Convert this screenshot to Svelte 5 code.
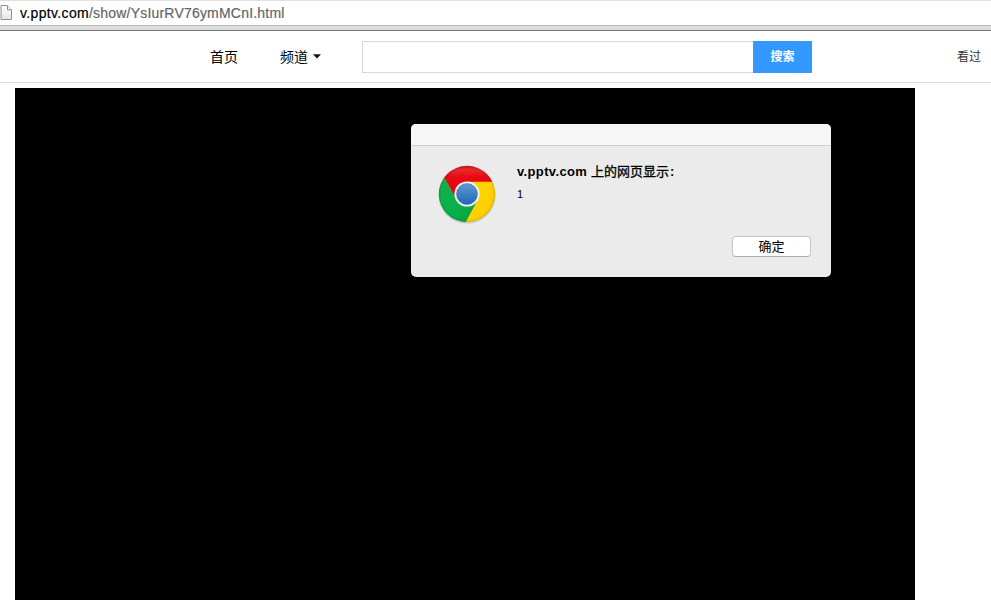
<script>
  const host = 'v.pptv.com';
  const path = '/show/YsIurRV76ymMCnI.html';
</script>

<div class="window">
  <div class="address">
    <svg class="doc" width="12" height="16" viewBox="0 0 12 16">
      <defs>
        <linearGradient id="paper" x1="0" y1="0" x2="0" y2="1">
          <stop offset="0" stop-color="#fff" />
          <stop offset="1" stop-color="#e6e6e6" />
        </linearGradient>
      </defs>
      <path d="M1 .5H7.5L11.5 4.8V14.5H1Z" fill="url(#paper)" stroke="#909090" />
      <path d="M7.5.5V4.8H11.5" fill="#fafafa" stroke="#909090" />
    </svg>
    <span class="url"><span class="host">{host}</span><span class="path">{path}</span></span>
  </div>
  <div class="edge"></div>

  <header>
    <nav>
      <span class="home">首页</span>
      <span class="channel">频道</span>
      <svg class="caret" width="8" height="5" viewBox="0 0 8 5"><path d="M0 .3H8L4 4.5Z" fill="#111" /></svg>
    </nav>
    <form class="search">
      <div class="field"></div>
      <div class="go">搜索</div>
    </form>
    <span class="seen">看过</span>
  </header>

  <main>
    <section class="dialog">
      <div class="titlebar"></div>
      <div class="content">
        <svg class="logo" width="62" height="62" viewBox="0 0 62 62">
          <defs>
            <linearGradient id="red" gradientUnits="userSpaceOnUse" x1="0" y1="2" x2="0" y2="36">
              <stop offset="0" stop-color="#c8141c" />
              <stop offset=".14" stop-color="#ea2a2a" />
              <stop offset=".35" stop-color="#e60a14" />
              <stop offset="1" stop-color="#e3000d" />
            </linearGradient>
            <linearGradient id="green" x1="0" y1="0" x2="1" y2="1">
              <stop offset="0" stop-color="#16ac50" />
              <stop offset=".5" stop-color="#08b44a" />
              <stop offset="1" stop-color="#09a040" />
            </linearGradient>
            <linearGradient id="yellow" x1="0" y1="0" x2="1" y2="0">
              <stop offset="0" stop-color="#ffd200" />
              <stop offset="1" stop-color="#fdd000" />
            </linearGradient>
            <linearGradient id="blue" x1="0" y1="0" x2="0" y2="1">
              <stop offset="0" stop-color="#6199d2" />
              <stop offset="1" stop-color="#1e68b5" />
            </linearGradient>
            <radialGradient id="rim">
              <stop offset=".9" stop-color="#000" stop-opacity="0" />
              <stop offset="1" stop-color="#000" stop-opacity=".13" />
            </radialGradient>
            <clipPath id="disc"><circle cx="31" cy="31" r="28.2" /></clipPath>
          </defs>
          <circle cx="31" cy="32" r="28.6" fill="#000" opacity=".14" />
          <g clip-path="url(#disc)">
            <path d="M0 0H62V19H31L20 36L8.3 15L0 10Z" fill="url(#red)" />
            <path d="M31 18.8H62V62H27L29 60L41 37Z" fill="url(#yellow)" />
            <path d="M8.2 14.8L20 35.5L31 43L40.6 39L29.2 60L27 62H0V10Z" fill="url(#green)" />
            <circle cx="31" cy="31" r="28.2" fill="url(#rim)" />
          </g>
          <circle cx="31" cy="31" r="12.6" fill="#f5f5f5" />
          <circle cx="31" cy="31" r="10.5" fill="url(#blue)" stroke="#2868a8" stroke-width=".5" />
        </svg>
        <div class="message">
          <div class="heading"><b>v.pptv.com</b><span>上的网页显示</span><i>:</i></div>
          <div class="value">1</div>
        </div>
      </div>
      <div class="actions"><div class="ok">确定</div></div>
    </section>
  </main>
</div>

<style>
  :global(body) {
    margin: 0;
    background: #fff;
    overflow: hidden;
  }
  .window {
    width: 991px;
    height: 600px;
    overflow: hidden;
    display: flex;
    flex-direction: column;
    font-family: "Liberation Sans", "Noto Sans CJK SC", sans-serif;
    color: #000;
  }
  .address {
    box-sizing: border-box;
    height: 25px;
    flex: none;
    border-top: 1px solid #e2e2e2;
    display: flex;
    align-items: flex-start;
  }
  .doc {
    margin-top: 4px;
    flex: none;
  }
  .url {
    margin: 2px 0 0 8px;
    font-size: 14px;
    line-height: 20px;
    white-space: nowrap;
    display: flex;
  }
  .host {
    width: 69px;
    letter-spacing: 0.35px;
    -webkit-text-stroke: 0.2px #000;
  }
  .path {
    color: #666;
    -webkit-text-stroke: 0.2px #666;
    letter-spacing: 0.2px;
  }
  .edge {
    box-sizing: border-box;
    height: 6px;
    flex: none;
    background: #dcdcdc;
    border-top: 1px solid #b9b9b9;
    border-bottom: 1px solid #757575;
  }
  header {
    box-sizing: border-box;
    height: 52px;
    flex: none;
    border-bottom: 1px solid #dcdcdc;
    display: flex;
    align-items: center;
  }
  nav {
    width: 362px;
    display: flex;
    align-items: center;
    font-size: 14px;
    line-height: 20px;
  }
  .home {
    margin-left: 210px;
    width: 70px;
  }
  .caret {
    margin: -1px 0 0 5px;
  }
  .search {
    display: flex;
    width: 450px;
    height: 32px;
    margin: 0;
  }
  .field {
    box-sizing: border-box;
    width: 391px;
    border: 1px solid #d8d8d8;
    border-right: 0;
  }
  .go {
    width: 59px;
    background: #3399ff;
    color: #fff;
    font-size: 12px;
    font-weight: bold;
    line-height: 32px;
    text-align: center;
  }
  .seen {
    margin-left: auto;
    padding-right: 10px;
    font-size: 12px;
    line-height: 20px;
    color: #333;
  }
  main {
    box-sizing: border-box;
    width: 900px;
    height: 512px;
    margin: 5px 0 0 15px;
    padding: 36px 0 0 396px;
    background: #000;
  }
  .dialog {
    width: 420px;
    height: 153px;
    border-radius: 5px;
    background: #ebebeb;
    overflow: hidden;
  }
  .titlebar {
    height: 21px;
    background: #f6f6f6;
    border-bottom: 1px solid #d0d0d0;
  }
  .content {
    height: 90px;
    display: flex;
  }
  .logo {
    margin: 17px 0 0 25px;
    flex: none;
  }
  .message {
    margin: 16px 0 0 19px;
  }
  .heading {
    display: flex;
    height: 20px;
    font-size: 13px;
    line-height: 20px;
    white-space: nowrap;
  }
  .heading b {
    width: 74px;
    letter-spacing: 0.35px;
  }
  .heading span {
    -webkit-text-stroke: 0.3px #000;
  }
  .heading i {
    font-style: normal;
    font-weight: bold;
    margin-left: 1px;
  }
  .value {
    margin-top: 4px;
    font-size: 11px;
    line-height: 16px;
  }
  .actions {
    display: flex;
    justify-content: flex-end;
    padding-right: 20px;
  }
  .ok {
    box-sizing: border-box;
    width: 79px;
    height: 21px;
    border: 1px solid #c4c4c4;
    border-bottom-color: #aaa;
    border-radius: 4px;
    background: #fff;
    font-size: 13px;
    line-height: 19px;
    text-align: center;
  }
</style>
